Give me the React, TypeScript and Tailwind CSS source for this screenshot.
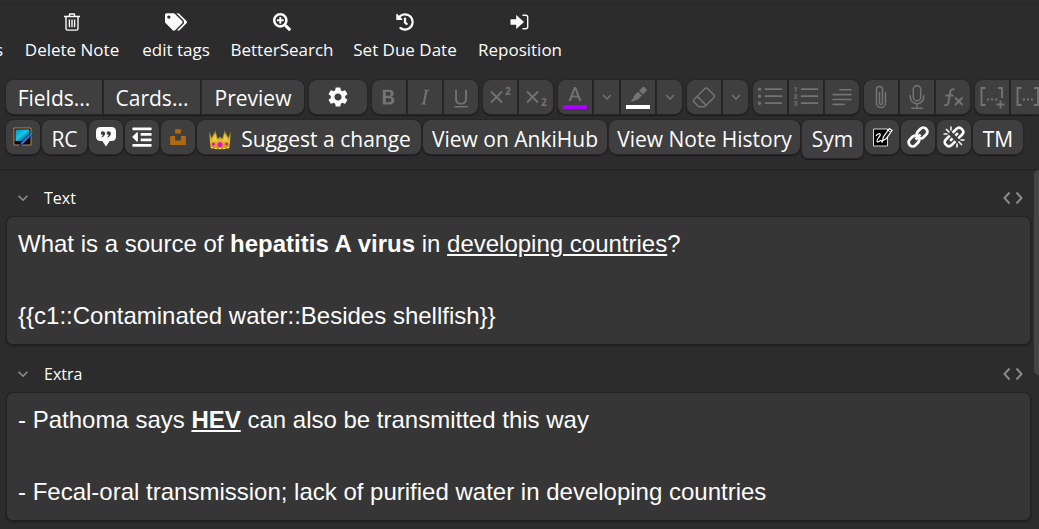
import type { ReactNode } from 'react';
import {
  BsEraser,
  BsListOl,
  BsListUl,
  BsMic,
  BsPaperclip,
  BsTextParagraph,
  BsTypeBold,
  BsTypeItalic,
  BsTypeUnderline,
} from 'react-icons/bs';
import { FaHistory, FaOutdent, FaSearchPlus, FaTags, FaUnsplash } from 'react-icons/fa';
import { MdExpandMore, MdSettings } from 'react-icons/md';
import clsx from 'clsx';

interface ToolButtonProps {
  label?: string;
  className?: string;
  muted?: boolean;
  children: ReactNode;
}

const ToolButton = ({ label, className, muted, children }: ToolButtonProps) => (
  <button
    type="button"
    aria-label={label}
    className={clsx(
      'flex shrink-0 items-center justify-center whitespace-nowrap bg-[#3f3f3f] text-[21px] leading-7 shadow-[0_0_0_1px_#262626,0_1px_1px_1px_#1c1c1c]',
      muted ? 'text-[#737373]' : 'text-[#fcfcfc]',
      className
    )}
  >
    {children}
  </button>
);

const Group = ({ children }: { children: ReactNode }) => (
  <div className="flex h-[34px] shrink-0 gap-0.5 [&>*:first-child]:rounded-l-lg [&>*:last-child]:rounded-r-lg">
    {children}
  </div>
);

const TrashIcon = () => (
  <svg viewBox="0 0 20 20" className="size-5" fill="none" stroke="currentColor" strokeWidth="1.4">
    <path d="M2 4.5h16M7 4.3l.8-2.3h4.4l.8 2.3M4 4.8v11.7c0 1 .6 1.6 1.5 1.6h9c.9 0 1.5-.6 1.5-1.6V4.8M7.4 7.5v7.7M10 7.5v7.7M12.6 7.5v7.7" />
  </svg>
);

const EnterIcon = () => (
  <svg viewBox="0 0 20 20" className="size-5">
    <path d="M.5 7.3h5.700V3L14 10l-7.800 7v-4.300H.5z" fill="currentColor" />
    <path d="M12.500 3.300h3.200c1.300 0 2 .7 2 2v9.400c0 1.300-.7 2-2 2h-3.200" fill="none" stroke="currentColor" strokeWidth="1.400" />
  </svg>
);

const ScriptIcon = ({ raised }: { raised?: boolean }) => (
  <svg viewBox="0 0 24 24" className="size-6 overflow-visible" fill="currentColor">
    <path d="M3 6.500l11 11M14 6.500l-11 11" stroke="currentColor" strokeWidth="1.800" />
    <text x="17" y={raised ? 10 : 21} fontSize="10" fontWeight="700">2</text>
  </svg>
);

const TextColorIcon = () => (
  <svg viewBox="0 0 26 26" className="size-[26px]" fill="currentColor">
    <path d="M12 3h2.100l5.400 14h-2.300l-1.300-3.500h-5.700L8.900 17H6.600zm-1.100 8.600h4.300L13.050 5.800z" />
    <path d="M1 21h24v4H1z" fill="#aa00ff" />
  </svg>
);

const HighlightIcon = () => (
  <svg viewBox="0 0 26 26" className="size-[26px]" fill="currentColor">
    <path d="M17.500 3.300c.7-.7 1.500-.7 2.200 0l1.600 1.600c.7.7.7 1.500 0 2.200l-3.400 3.500-3.900-3.900zM13 7.700l3.900 3.900-4 4c-.6.600-1.300.6-2 .1l-1.500 1.500H5.500l3.400-3.500c-.5-.7-.4-1.400.1-2z" />
    <path d="M1 21h24v4H1z" fill="#ffffff" />
  </svg>
);

const FunctionIcon = () => (
  <svg viewBox="0 0 24 24" className="size-6" fill="none" stroke="currentColor" strokeWidth="2">
    <path d="M13.500 4.600c-2.300-1-3.900.1-4.300 2.500L7.400 17.600c-.4 2.300-2 3.200-4.200 2.300M4.500 10.500h8M14 12.500l7.500 7.500M21.500 12.500L14 20" />
  </svg>
);

const ClozeIcon = ({ plus }: { plus?: boolean }) => (
  <svg viewBox="0 0 26 26" className="size-[26px]" fill="none" stroke="currentColor" strokeWidth="1.900">
    <path d="M6.500 4H2.500v17h4M19 4h4v10" />
    <path d="M8 15.500h2M12 15.500h2M16 15.500h2" />
    {plus ? <path d="M21.500 16.500v8M17.500 20.500h8" /> : <path d="M23 14v7h-4" />}
  </svg>
);

const CodeIcon = () => (
  <svg viewBox="0 0 20 20" className="size-5" fill="none" stroke="currentColor" strokeWidth="2">
    <path d="M6.500 4.500L1.500 10l5 5.500M13.500 4.500l5 5.500-5 5.500" />
  </svg>
);

const ImageEditIcon = () => (
  <svg viewBox="0 0 24 24" className="size-6">
    <defs>
      <linearGradient id="screen" x1="0" y1="0" x2="1" y2="1">
        <stop offset="0" stopColor="#0a8fb0" />
        <stop offset="0.450" stopColor="#12c8ee" />
        <stop offset="1" stopColor="#0b2637" />
      </linearGradient>
    </defs>
    <path d="M3 3h17v17H3z" fill="#08090b" stroke="#b9835d" />
    <path d="M4.500 4.500h14V12L10 16H4.500z" fill="url(#screen)" />
    <path d="M8.500 21l2-4.300 9-8.500 2.500-.7-1.300 2.700-8.700 8.800z" fill="#2f7de0" stroke="#0b1d55" strokeWidth="0.800" />
    <path d="M19 8.800l3-2.200-1.200 3.600z" fill="#3f9b45" />
  </svg>
);

const QuoteIcon = () => (
  <svg viewBox="0 0 24 24" className="size-6">
    <path d="M6.500 2h11c3 0 4.500 1.600 4.500 4.500v5c0 3-1.600 4.500-4.500 4.500h-1.800L12 21.500 8.300 16H6.500C3.600 16 2 14.400 2 11.500v-5C2 3.600 3.600 2 6.500 2z" fill="currentColor" />
    <path d="M8.800 6.200c3.200 0 3.300 4.200-.9 6.400l-.5-.8c1-.7 1.400-1.300 1.400-1.900-2.400.1-2.600-3.700 0-3.700zM14.600 6.200c3.200 0 3.300 4.200-.9 6.400l-.5-.8c1-.7 1.400-1.300 1.400-1.900-2.400.1-2.600-3.700 0-3.700z" fill="#3f3f3f" />
  </svg>
);

const CrownIcon = () => (
  <svg viewBox="0 0 26 24" className="h-6 w-[26px]">
    <defs>
      <linearGradient id="gold" x1="0" y1="0" x2="0" y2="1">
        <stop offset="0" stopColor="#7d6520" />
        <stop offset="0.550" stopColor="#e3bb2c" />
        <stop offset="1" stopColor="#c89208" />
      </linearGradient>
    </defs>
    <path d="M2 4l2.800 6.800L8.300 3l2.500 9 2.200-2.500 2.200 2.500 2.500-9 3.500 7.800L24 4l-1.500 17c-5 1.800-14 1.800-19 0z" fill="url(#gold)" />
    <path d="M5 13l3.300-7 1.800 8.500zM21 13l-3.300-7-1.800 8.500z" fill="#eccb48" />
    <circle cx="13" cy="17.500" r="2.600" fill="#e619b8" />
    <circle cx="6.500" cy="17" r="1.600" fill="#d31bb0" />
    <circle cx="19.500" cy="17" r="1.600" fill="#d31bb0" />
    <path d="M4 20.500c5 1.500 13 1.500 18 0" fill="none" stroke="#fff0a0" strokeDasharray="2 2" />
  </svg>
);

const SketchIcon = () => (
  <svg viewBox="0 0 24 24" className="size-6" fill="none">
    <path d="M3.500 4h14v17h-14z" fill="#000" stroke="#d8d8d8" />
    <path d="M6 11c2-3 5-3 4-.5S6 15 7 16.500s3-1.500 4-1 .5 2 2 1.500" stroke="#fff" strokeWidth="1.200" />
    <path d="M12.500 15.800l.8-3.800 6-8.500 2.800 2-6 8.400z" fill="#181818" stroke="#fff" strokeWidth="1.200" />
    <path d="M18 5.200l2.800 2" stroke="#fff" />
  </svg>
);

const LinkIcon = () => (
  <svg viewBox="0 0 24 24" className="size-6" fill="none" stroke="currentColor" strokeWidth="2.800">
    <g transform="rotate(-45 12 12)">
      <rect x="0.500" y="8" width="11.500" height="8" rx="3.800" />
      <rect x="12" y="8" width="11.500" height="8" rx="3.800" />
      <path d="M8.500 12h7" />
    </g>
  </svg>
);

const BrokenLinkIcon = () => (
  <svg viewBox="0 0 24 24" className="size-6" fill="none" stroke="currentColor" strokeWidth="2.600">
    <g transform="rotate(-45 12 12)">
      <path d="M10 8H4.500C2.200 8 .8 9.500.8 12s1.400 4 3.700 4H10M14 8h5.500c2.300 0 3.700 1.500 3.700 4s-1.400 4-3.700 4H14M6.500 12h3.500M14 12h3.500" />
    </g>
    <path d="M9 1.500v4M4 4l3.500 3.500M1.500 9h4M15 18.500v4M16.500 16.500L20 20M18.500 15h4" strokeWidth="1.500" />
  </svg>
);

const actions = [
  { name: 'Delete Note', icon: <TrashIcon />, width: 'w-24' },
  { name: 'edit tags', icon: <FaTags className="h-5 w-[22px]" />, width: 'w-[70px]' },
  { name: 'BetterSearch', icon: <FaSearchPlus className="size-[18px]" />, width: 'w-[100px]' },
  { name: 'Set Due Date', icon: <FaHistory className="size-[18px]" />, width: 'w-[104px]' },
  { name: 'Reposition', icon: <EnterIcon />, width: 'w-[84px]' },
];

const Dropdown = ({ label }: { label: string }) => (
  <ToolButton label={label} muted className="w-[25px]">
    <MdExpandMore className="size-[18px]" />
  </ToolButton>
);

interface FieldProps {
  name: string;
  children: ReactNode;
}

const Field = ({ name, children }: FieldProps) => (
  <section className="pb-[13px]">
    <div className="flex h-9 items-center pb-0.5 pl-[7px] pr-[7px] text-[#8a8a8a]">
      <button type="button" aria-label={`Collapse ${name}`}>
        <MdExpandMore className="size-5" />
      </button>
      <span id={`field-${name}`} className="ml-[11px] text-base text-[#fcfcfc]">{name}</span>
      <button type="button" aria-label={`Edit HTML of ${name}`} className="ml-auto">
        <CodeIcon />
      </button>
    </div>
    <div
      role="textbox"
      aria-labelledby={`field-${name}`}
      contentEditable
      suppressContentEditableWarning
      className="ml-px rounded-md bg-[#363636] px-[11px] pb-2.5 pt-[9px] font-['Liberation_Sans',Arial,sans-serif] text-2xl leading-9 text-[#fcfcfc] shadow-[0_0_0_1px_#222222,0_1px_2px_1px_#1c1c1c] outline-none"
    >
      {children}
    </div>
  </section>
);

const App = () => (
  <div className="flex min-h-screen flex-col overflow-hidden bg-[#2c2c2c] font-['Open_Sans','Noto_Sans',sans-serif] text-[#fcfcfc]">
    <nav className="mt-1 flex h-[75px] gap-[21px] border-t border-[#252525] text-[17px] leading-6">
      <button type="button" className="flex w-[3px] justify-end overflow-hidden pt-[33px]">s</button>
      {actions.map((action) => (
        <button
          key={action.name}
          type="button"
          className={clsx('flex shrink-0 flex-col items-center whitespace-nowrap pt-[7px]', action.width)}
        >
          <span className="flex h-5 items-center">{action.icon}</span>
          <span className="mt-1.5">{action.name}</span>
        </button>
      ))}
    </nav>

    <div className="flex flex-col gap-1.5 border-b border-[#222222] pb-[11px] pl-1.5 pt-px">
      <div className="flex gap-[5px]">
        <Group>
          <ToolButton className="w-24 pt-0.5">Fields...</ToolButton>
          <ToolButton className="w-24 pt-0.5">Cards...</ToolButton>
          <ToolButton className="w-[102px] pt-0.5">Preview</ToolButton>
        </Group>
        <Group>
          <ToolButton label="Options" className="w-[58px]"><MdSettings className="size-6" /></ToolButton>
        </Group>
        <Group>
          <ToolButton label="Bold" muted className="w-[34px]"><BsTypeBold className="size-6" /></ToolButton>
          <ToolButton label="Italic" muted className="w-[34px]"><BsTypeItalic className="size-6" /></ToolButton>
          <ToolButton label="Underline" muted className="w-[34px]"><BsTypeUnderline className="size-6" /></ToolButton>
        </Group>
        <Group>
          <ToolButton label="Superscript" muted className="w-[34px]"><ScriptIcon raised /></ToolButton>
          <ToolButton label="Subscript" muted className="w-[34px]"><ScriptIcon /></ToolButton>
        </Group>
        <Group>
          <ToolButton label="Text color" muted className="w-[34px]"><TextColorIcon /></ToolButton>
          <Dropdown label="Change text color" />
          <ToolButton label="Highlight" muted className="w-[34px]"><HighlightIcon /></ToolButton>
          <Dropdown label="Change highlight color" />
        </Group>
        <Group>
          <ToolButton label="Remove formatting" muted className="w-[34px]"><BsEraser className="size-6" /></ToolButton>
          <Dropdown label="Select formatting to remove" />
        </Group>
        <Group>
          <ToolButton label="Unordered list" muted className="w-[34px]"><BsListUl className="size-7" /></ToolButton>
          <ToolButton label="Ordered list" muted className="w-[34px]"><BsListOl className="size-7" /></ToolButton>
          <ToolButton label="Alignment" muted className="w-[34px]"><BsTextParagraph className="size-[26px]" /></ToolButton>
        </Group>
        <Group>
          <ToolButton label="Attach file" muted className="w-[34px]"><BsPaperclip className="size-6" /></ToolButton>
          <ToolButton label="Record audio" muted className="w-[34px]"><BsMic className="size-6" /></ToolButton>
          <ToolButton label="Equations" muted className="w-[34px]"><FunctionIcon /></ToolButton>
        </Group>
        <Group>
          <ToolButton label="New cloze" muted className="w-[34px]"><ClozeIcon plus /></ToolButton>
          <ToolButton label="Same cloze" muted className="w-[34px]"><ClozeIcon /></ToolButton>
        </Group>
      </div>

      <div className="flex h-[38px] items-start gap-0.5">
        <ToolButton label="Edit image" className="h-[34px] w-[34px] rounded-lg"><ImageEditIcon /></ToolButton>
        <ToolButton className="h-[34px] w-[45px] rounded-lg pt-1">RC</ToolButton>
        <ToolButton label="Blockquote" className="h-[34px] w-[34px] rounded-lg"><QuoteIcon /></ToolButton>
        <ToolButton label="Outdent" className="h-[34px] w-[34px] rounded-lg"><FaOutdent className="size-[22px]" /></ToolButton>
        <ToolButton label="Unsplash" className="h-[34px] w-[34px] rounded-lg"><FaUnsplash className="size-[18px] text-[#b0690e]" /></ToolButton>
        <ToolButton className="h-[34px] w-56 gap-2 rounded-lg pt-1"><CrownIcon />Suggest a change</ToolButton>
        <ToolButton className="h-[34px] w-[184px] rounded-lg pt-1">View on AnkiHub</ToolButton>
        <ToolButton className="h-[34px] w-[191px] rounded-lg pt-1">View Note History</ToolButton>
        <ToolButton className="h-[38px] w-[61px] rounded-md">Sym</ToolButton>
        <ToolButton label="Sketch" className="h-[34px] w-[34px] rounded-lg"><SketchIcon /></ToolButton>
        <ToolButton label="Insert link" className="h-[34px] w-[34px] rounded-lg text-[#dddddd]"><LinkIcon /></ToolButton>
        <ToolButton label="Remove link" className="h-[34px] w-[34px] rounded-lg text-[#dddddd]"><BrokenLinkIcon /></ToolButton>
        <ToolButton className="h-[34px] w-[50px] rounded-lg pt-1">TM</ToolButton>
      </div>
    </div>

    <div className="flex flex-1">
      <main className="min-w-0 flex-1 pl-1.5 pr-1 pt-[11px]">
        <Field name="Text">
          <p>What is a source of <b>hepatitis A virus</b> in <u>developing countries</u>?</p>
          <p><br /></p>
          <p>{'{{c1::Contaminated water::Besides shellfish}}'}</p>
        </Field>
        <Field name="Extra">
          <p>- Pathoma says <b><u>HEV</u></b> can also be transmitted this way</p>
          <p><br /></p>
          <p>- Fecal-oral transmission; lack of purified water in developing countries</p>
        </Field>
      </main>
      <div className="w-[5px] shrink-0">
        <div className="h-[205px] rounded-l-md bg-[#454545]" />
      </div>
    </div>
  </div>
);

export default App;
